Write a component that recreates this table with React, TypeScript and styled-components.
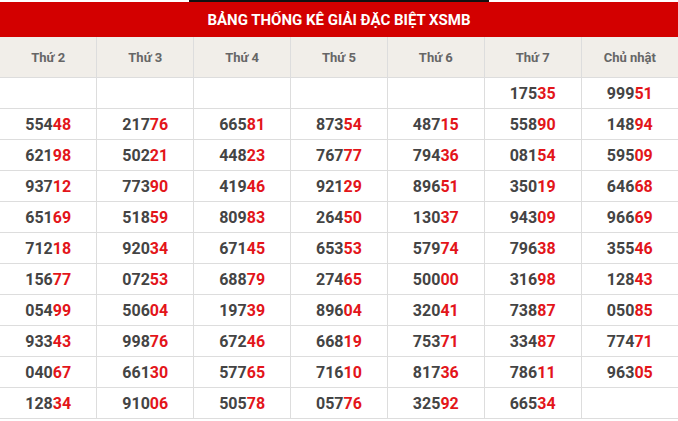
import React from "react";
import styled, { createGlobalStyle } from "styled-components";

const Global = createGlobalStyle`
  html, body { margin: 0; padding: 0; background: #fff; }
  body { font-family: Roboto, "Liberation Sans", Arial, sans-serif; }
`;

const Page = styled.div`
  width: 678px;
  display: flex;
  flex-direction: column;
  align-items: center;
`;

const TopStrip = styled.div`
  width: 300px;
  height: 2px;
  background: #111;
`;

const TitleBar = styled.div`
  width: 100%;
  height: 35px;
  background: #d30000;
  color: #fff;
  font-weight: 700;
  font-size: 15px;
  display: flex;
  align-items: center;
  justify-content: center;
  text-transform: uppercase;
`;

const Table = styled.table`
  width: 678px;
  border-collapse: collapse;
  table-layout: fixed;
`;

const HeadCell = styled.th`
  height: 40px;
  background: #f1eee9;
  color: #666;
  font-size: 13px;
  font-weight: 700;
  text-align: center;
  border: 1px solid #ddd;
  border-top: none;
  padding: 0;
  &:first-child { border-left: none; }
  &:last-child { border-right: none; }
`;

const Cell = styled.td`
  height: 30px;
  border: 1px solid #ddd;
  padding: 0;
  text-align: center;
  font-size: 16px;
  font-weight: 700;
  color: #444;
  &:first-child { border-left: none; }
  &:last-child { border-right: none; }
`;

const Tail = styled.span`
  color: #e3151a;
`;

const days = ["Thứ 2", "Thứ 3", "Thứ 4", "Thứ 5", "Thứ 6", "Thứ 7", "Chủ nhật"];

const rows: string[][] = [
  ["", "", "", "", "", "17535", "99951"],
  ["55448", "21776", "66581", "87354", "48715", "55890", "14894"],
  ["62198", "50221", "44823", "76777", "79436", "08154", "59509"],
  ["93712", "77390", "41946", "92129", "89651", "35019", "64668"],
  ["65169", "51859", "80983", "26450", "13037", "94309", "96669"],
  ["71218", "92034", "67145", "65353", "57974", "79638", "35546"],
  ["15677", "07253", "68879", "27465", "50000", "31698", "12843"],
  ["05499", "50604", "19739", "89604", "32041", "73887", "05085"],
  ["93343", "99876", "67246", "66819", "75371", "33487", "77471"],
  ["04067", "66130", "57765", "71610", "81736", "78611", "96305"],
  ["12834", "91006", "50578", "05776", "32592", "66534", ""],
];

const Num = ({ v }: { v: string }) =>
  v ? (
    <>
      {v.slice(0, 3)}
      <Tail>{v.slice(3)}</Tail>
    </>
  ) : null;

export default function App() {
  return (
    <>
      <Global />
      <Page>
        <TopStrip />
        <TitleBar>Bảng thống kê giải đặc biệt XSMB</TitleBar>
        <Table>
          <thead>
            <tr>
              {days.map((d) => (
                <HeadCell key={d}>{d}</HeadCell>
              ))}
            </tr>
          </thead>
          <tbody>
            {rows.map((r, i) => (
              <tr key={i}>
                {r.map((v, j) => (
                  <Cell key={j}>
                    <Num v={v} />
                  </Cell>
                ))}
              </tr>
            ))}
          </tbody>
        </Table>
      </Page>
    </>
  );
}
